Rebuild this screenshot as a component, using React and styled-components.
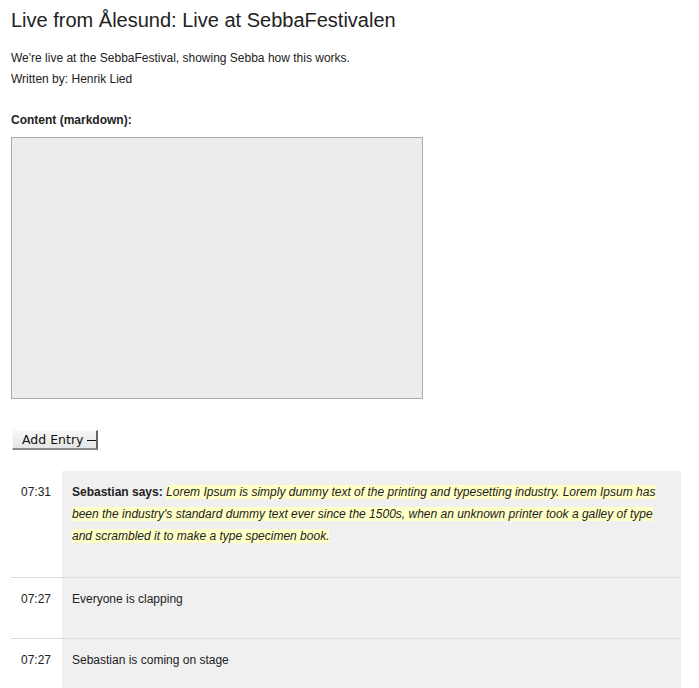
import React from 'react';
import styled, { createGlobalStyle } from 'styled-components';

const GlobalStyle = createGlobalStyle`
  body {
    margin: 0;
    background: #fff;
    font-family: "Liberation Sans", Arial, Helvetica, sans-serif;
    color: #222;
  }
`;

const Page = styled.div`
  padding: 8px 18px 0 11px;
`;

const Title = styled.h1`
  font-size: 20px;
  font-weight: normal;
  line-height: 24px;
  margin: 0 0 16px;
  color: #222;
`;

const Text = styled.p`
  font-size: 12px;
  line-height: 21px;
  margin: 0;
`;

const Form = styled.form`
  margin-top: 20px;
  display: flex;
  flex-direction: column;
  align-items: flex-start;
`;

const Label = styled.label`
  font-size: 12px;
  font-weight: bold;
  line-height: 21px;
  margin-bottom: 6px;
`;

const Editor = styled.textarea`
  box-sizing: border-box;
  width: 412px;
  height: 262px;
  background: #ececec;
  border: 1px solid #aaa;
  resize: none;
  margin: 0;
`;

const Button = styled.button`
  margin: 31px 0 0 1px;
  height: 20px;
  padding: 0 0 0 9px;
  display: flex;
  align-items: center;
  gap: 4px;
  font-family: "DejaVu Sans", "Lucida Grande", sans-serif;
  font-size: 12.5px;
  color: #111;
  background: linear-gradient(#f6f6f6, #e6e6e6);
  border: none;
  border-right: 2px solid #666;
  border-bottom: 2px solid #8a8a8a;
  border-top: 1px solid #fafafa;
  border-left: 1px solid #fafafa;
  border-radius: 0;
  cursor: pointer;
`;

const Dash = styled.span`
  width: 9px;
  height: 1px;
  background: #111;
  margin-top: 1px;
`;

const Entries = styled.div`
  margin-top: 21px;
  width: 670px;
`;

const Entry = styled.div`
  display: grid;
  grid-template-columns: 51px 1fr;
  border-bottom: 1px solid #dcdcdc;
  font-size: 12px;
  line-height: 22px;
`;

const Time = styled.div`
  padding: 10px 0 0 10px;
`;

const Body = styled.div`
  background: #f0f0f0;
  padding: 10px 10px ${(p) => (p.$long ? 30 : 28)}px;
`;

const Quote = styled.em`
  background: #ffffc8;
`;

const entries = [
  {
    time: '07:31',
    who: 'Sebastian says:',
    text:
      "Lorem Ipsum is simply dummy text of the printing and typesetting industry. Lorem Ipsum has been the industry's standard dummy text ever since the 1500s, when an unknown printer took a galley of type and scrambled it to make a type specimen book.",
  },
  { time: '07:27', text: 'Everyone is clapping' },
  { time: '07:27', text: 'Sebastian is coming on stage' },
];

const App = () => (
  <Page>
    <GlobalStyle />
    <Title>Live from Ålesund: Live at SebbaFestivalen</Title>
    <Text>We're live at the SebbaFestival, showing Sebba how this works.</Text>
    <Text>Written by: Henrik Lied</Text>

    <Form onSubmit={(e) => e.preventDefault()}>
      <Label htmlFor="content">Content (markdown):</Label>
      <Editor id="content" />
      <Button type="submit">
        Add Entry <Dash />
      </Button>
    </Form>

    <Entries>
      {entries.map((entry, i) => (
        <Entry key={i}>
          <Time>{entry.time}</Time>
          <Body $long={!!entry.who}>
            {entry.who ? (
              <>
                <strong>{entry.who}</strong> <Quote>{entry.text}</Quote>
              </>
            ) : (
              entry.text
            )}
          </Body>
        </Entry>
      ))}
    </Entries>
  </Page>
);

export default App;
